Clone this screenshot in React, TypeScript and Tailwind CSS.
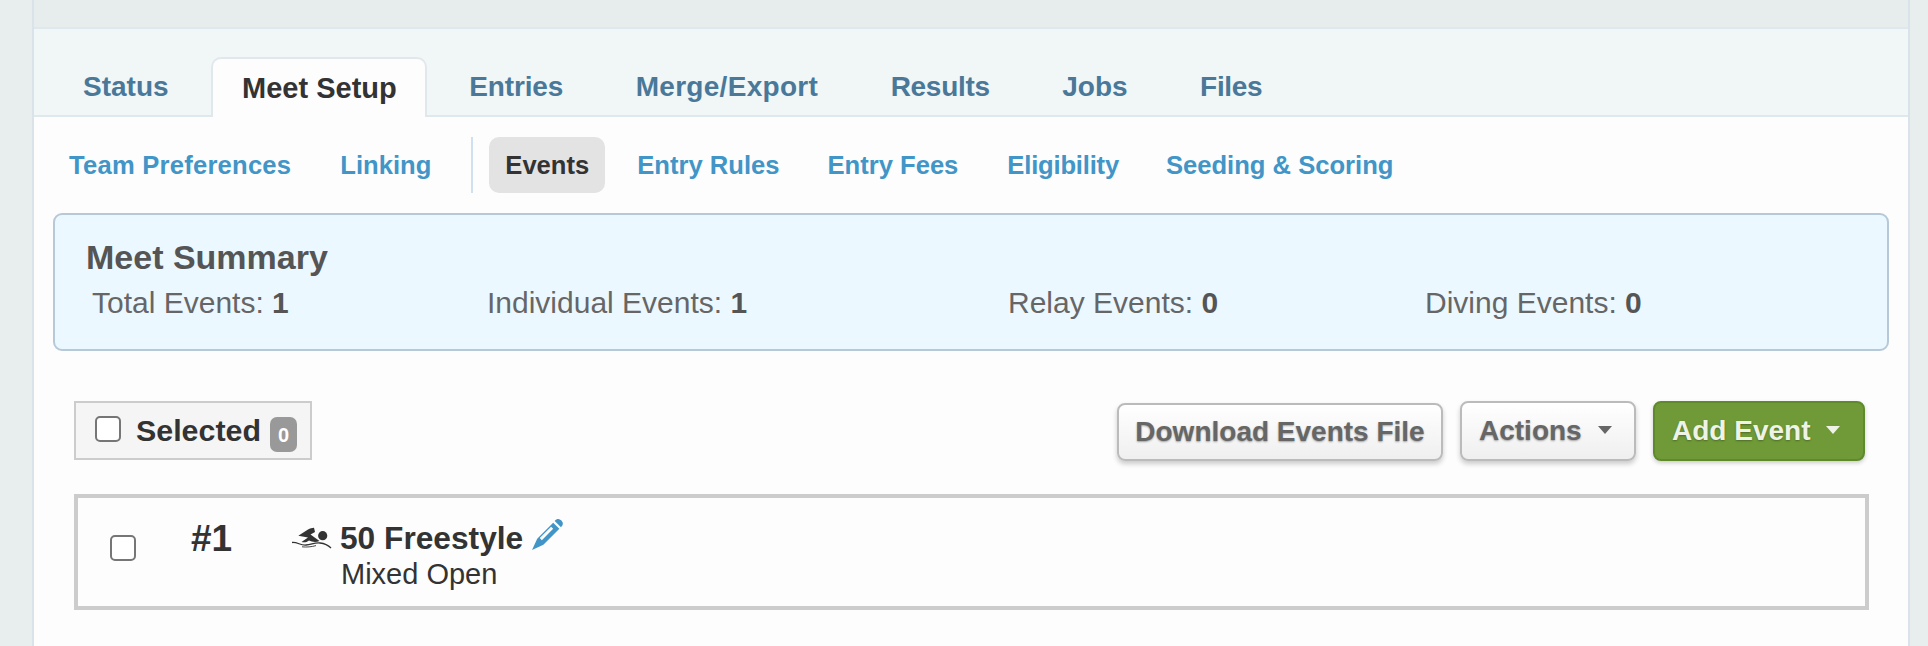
import React from 'react';

const font = { fontFamily: '"Liberation Sans", Arial, sans-serif' };

// the reference is not Liberation, so a few labels need a nudge to keep their width
const tabs = [
  { label: 'Status', fit: '' },
  { label: 'Meet Setup', fit: '' },
  { label: 'Entries', fit: 'tracking-[-0.15px]' },
  { label: 'Merge/Export', fit: 'tracking-[0.3px]' },
  { label: 'Results', fit: 'tracking-[-0.3px]' },
  { label: 'Jobs', fit: '' },
  { label: 'Files', fit: 'tracking-[-0.3px]' },
];

function Swimmer() {
  return (
    <svg width="40" height="22" viewBox="0 0 40 22" className="shrink-0">
      <circle cx="30.7" cy="8.7" r="4.6" fill="#333" />
      <path d="M6.3 8.7 L16 2.5 C18 1.2 20 1 22 0.8 L23 5 L18.5 7.5 L27.5 14 C24 15.5 20 15 17 13.5 C14.5 15.5 12 15.5 9.5 15 L16 10.5 Z" fill="#333" />
      <path d="M0 15.5 C6 15 8 18.5 14 18 C20 17.5 22 15.5 28 16 C33 16.5 36 18 39 21" fill="none" stroke="#333" strokeWidth="1.3" />
      <path d="M10 19.8 C14 20.4 20 19.8 24 18.6" fill="none" stroke="#333" strokeWidth="0.9" />
    </svg>
  );
}

function Pencil() {
  return (
    <svg width="33" height="33" viewBox="0 0 32 32" className="shrink-0">
      <path d="M6 20 L21.5 4.5 L27.5 10.5 L12 26 L1 31 Z M19.5 8.5 L8.5 19.5 L10.5 21.5 L21.5 10.5 Z" fill="#4195c7" fillRule="evenodd" />
      <path d="M23 3 C25 0.5 27.5 0.5 29.5 2.5 C31.5 4.5 31.5 7 29 9 Z" fill="#4195c7" />
    </svg>
  );
}

function Caret({ color }: { color: string }) {
  return <span className={`ml-[16px] -mt-[2px] inline-block h-0 w-0 border-x-[7px] border-t-[8px] border-x-transparent ${color}`} />;
}

export default function App() {
  return (
    <div style={font} className="h-[646px] w-full overflow-hidden bg-[#e8eeee] pl-[32px] pr-[18px]">
      <div className="h-full border-x-2 border-[#d9e3e9] bg-[#fdfdfd]">
        <div className="h-[29px] border-b-2 border-[#dfe8ec] bg-[#e7eded]" />

        {/* top tabs */}
        <div className="flex h-[88px] items-end gap-[12.5px] border-b-2 border-[#dfe8ec] bg-[#f1f6f7] pl-[19px]">
          {tabs.map((tab) =>
            tab.label === 'Meet Setup' ? (
              <div
                key={tab.label}
                className="relative top-[2px] flex h-[60px] items-center rounded-t-[10px] border-x-2 border-t-2 border-[#e1e8ec] bg-[#fdfdfd] pl-[29px] pr-[28px] pt-[1px] text-[29px] font-bold text-[#333]"
              >
                {tab.label}
              </div>
            ) : (
              <div
                key={tab.label}
                className={`flex h-[58px] items-center px-[30px] pt-[2px] text-[28px] font-bold text-[#4a7899] ${tab.fit}`}
              >
                {tab.label}
              </div>
            ),
          )}
        </div>

        {/* sub nav */}
        <div className="mt-[20px] flex h-[56px] items-center pl-[35px] text-[25.6px] font-bold text-[#4195c7]">
          <span className="mr-[49px] tracking-[0.23px]">Team Preferences</span>
          <span className="mr-[40px]">Linking</span>
          <span className="mr-[16px] h-[56px] w-[2px] bg-[#cfe0f0]" />
          <span className="mr-[32px] flex h-[56px] items-center rounded-[10px] bg-[#e3e3e3] px-[16px] text-[#333]">Events</span>
          <span className="mr-[48px]">Entry Rules</span>
          <span className="mr-[49px]">Entry Fees</span>
          <span className="mr-[47px] tracking-[-0.2px]">Eligibility</span>
          <span>Seeding &amp; Scoring</span>
        </div>

        {/* summary */}
        <div className="mx-[19px] mt-[20px] h-[138px] rounded-[9px] border-2 border-[#b5c9d9] bg-[#ecf8ff] pl-[31px] pt-[22px] text-[#666]">
          <div className="text-[34px] leading-[40px] font-bold text-[#555]">Meet Summary</div>
          <div className="mt-[8px] flex pl-[6px] text-[30px] leading-[36px]">
            <div className="w-[395px]">Total Events: <b className="text-[#555]">1</b></div>
            <div className="w-[521px]">Individual Events: <b className="text-[#555]">1</b></div>
            <div className="w-[417px]">Relay Events: <b className="text-[#555]">0</b></div>
            <div>Diving Events: <b className="text-[#555]">0</b></div>
          </div>
        </div>

        {/* toolbar */}
        <div className="mt-[50px] flex h-[60px] items-start justify-between pl-[40px] pr-[43px]">
          <div className="flex h-[59px] w-[238px] items-center border-2 border-[#ccc] bg-[#f5f5f5] pl-[19px]">
            <span className="-mt-[3px] h-[26px] w-[26px] rounded-[5px] border-2 border-[#767676] bg-white" />
            <span className="ml-[15px] mt-[1px] text-[30.4px] font-bold text-[#333]">Selected</span>
            <span className="ml-[9px] mt-[8px] flex h-[35px] w-[27px] items-center justify-center rounded-[7px] bg-[#999] text-[20px] font-bold text-white">0</span>
          </div>
          <div className="flex gap-[17px]">
            <button className="mt-[2px] flex h-[58px] w-[326px] items-center justify-center rounded-[8px] border-2 border-[#bbb] bg-gradient-to-b from-white to-[#efefef] text-[28px] font-bold text-[#666] shadow-[0_3px_5px_rgba(0,0,0,0.2)] [text-shadow:0_1px_2px_rgba(0,0,0,0.35)]">
              Download Events File
            </button>
            <button className="flex h-[60px] w-[176px] items-center rounded-[8px] border-2 border-[#bbb] bg-gradient-to-b from-white to-[#efefef] pl-[17px] text-[28px] font-bold text-[#666] shadow-[0_3px_5px_rgba(0,0,0,0.2)] [text-shadow:0_1px_2px_rgba(0,0,0,0.35)]">
              Actions
              <Caret color="border-t-[#666]" />
            </button>
            <button className="flex h-[60px] w-[212px] items-center rounded-[8px] border-2 border-[#5f8a2c] bg-[#6f9a37] pl-[17px] text-[28px] font-bold text-[#eef3e6] shadow-[0_2px_4px_rgba(0,0,0,0.2)] [text-shadow:0_1px_2px_rgba(0,0,0,0.3)]">
              Add Event
              <Caret color="border-t-[#eef3e6]" />
            </button>
          </div>
        </div>

        {/* event row */}
        <div className="ml-[40px] mr-[39px] mt-[33px] flex h-[116px] items-start border-4 border-[#ccc] bg-[#fdfdfd] text-[#333]">
          <span className="ml-[32px] mt-[37px] h-[26px] w-[26px] rounded-[5px] border-2 border-[#767676] bg-white" />
          <span className="ml-[55px] mt-[19px] w-[101px] text-[37px] leading-[44px] font-bold">#1</span>
          <div className="mt-[21px]">
            <div className="flex items-center">
              <Swimmer />
              <span className="ml-[8px] text-[31.7px] leading-[38px] font-bold">50 Freestyle</span>
              <span className="ml-[8px] -mt-[7px]"><Pencil /></span>
            </div>
            <div className="ml-[49px] text-[29px] leading-[34px]">Mixed Open</div>
          </div>
        </div>
      </div>
    </div>
  );
}
